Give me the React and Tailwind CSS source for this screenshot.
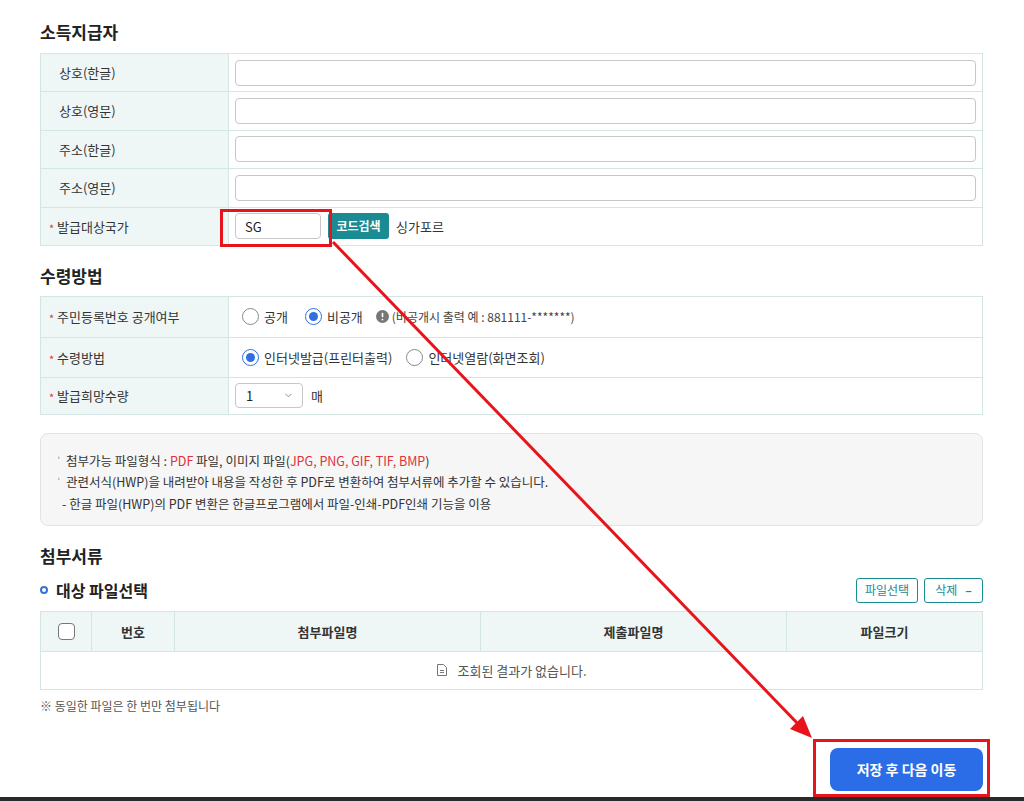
import React from 'react';
import { ChevronDown } from 'lucide-react';

const font = { fontFamily: '"Noto Sans CJK KR", "Noto Sans", sans-serif' };

// 라디오 버튼 (선택 / 미선택)
const Radio = ({ checked, label }) => (
    <label className="flex items-center gap-[5px] text-[13px] text-[#333]">
        {checked ? (
            <span className="w-[17px] h-[17px] rounded-full border-[1.5px] border-[#2f6fe0] flex items-center justify-center">
                <span className="w-[9px] h-[9px] rounded-full bg-[#2f6fe0]" />
            </span>
        ) : (
            <span className="w-[17px] h-[17px] rounded-full border border-[#8a8a8a] bg-white" />
        )}
        {label}
    </label>
);

const Label = ({ required, children }) => (
    <div className="bg-[#eef7f6] border-r border-[#d3e6e3] flex items-center text-[13px] text-[#333] pl-[8px]">
        {required ? (
            <span className="text-[#e0323a] text-[11px] w-[8px] leading-none mt-[4px]">*</span>
        ) : (
            <span className="w-[10px]" />
        )}
        {children}
    </div>
);

const TextInput = () => (
    <div className="flex items-center px-[6px]">
        <div className="w-full h-[26px] rounded-[4px] border border-[#c7c7c7] bg-white" />
    </div>
);

const App = () => {
    const rows = ['상호(한글)', '상호(영문)', '주소(한글)', '주소(영문)'];

    return (
        <div className="relative w-[1024px] h-[801px] bg-white overflow-hidden flex flex-col" style={font}>
            <div className="pl-10 pr-[41px] pt-[21px]">
                {/* 소득지급자 */}
                <h2 className="text-[17px] font-bold leading-[22px] text-[#222] mb-[10px]">소득지급자</h2>
                <div className="border border-[#d3e6e3]">
                    {rows.map((r) => (
                        <div key={r} className="grid grid-cols-[188px_1fr] h-[38.4px] border-b border-[#d3e6e3]">
                            <Label>{r}</Label>
                            <TextInput />
                        </div>
                    ))}
                    <div className="grid grid-cols-[188px_1fr] h-[37.4px]">
                        <Label required>발급대상국가</Label>
                        <div className="flex items-center px-[6px]">
                            <div className="w-[86px] h-[26px] rounded-[4px] border border-[#c7c7c7] bg-white flex items-center pl-[9px] text-[13px] text-[#222]">SG</div>
                            <button className="ml-[7px] w-[61px] h-[26px] bg-[#1a8b92] text-white text-[12px] font-bold rounded-[3px]">코드검색</button>
                            <span className="ml-[7px] text-[13px] text-[#333]">싱가포르</span>
                        </div>
                    </div>
                </div>

                {/* 수령방법 */}
                <h2 className="text-[17px] font-bold leading-[22px] text-[#222] mt-[19px] mb-[9px]">수령방법</h2>
                <div className="border border-[#d3e6e3]">
                    <div className="grid grid-cols-[188px_1fr] h-[41px] border-b border-[#d3e6e3]">
                        <Label required>주민등록번호 공개여부</Label>
                        <div className="flex items-center pl-[13px]">
                            <Radio label="공개" />
                            <span className="ml-[17px]"><Radio checked label="비공개" /></span>
                            <svg className="ml-[13px]" width="13" height="13" viewBox="0 0 13 13">
                                <circle cx="6.5" cy="6.5" r="6.5" fill="#777" />
                                <rect x="5.7" y="2.8" width="1.6" height="4.6" rx="0.8" fill="#fff" />
                                <circle cx="6.5" cy="9.6" r="0.9" fill="#fff" />
                            </svg>
                            <span className="ml-[3px] text-[12px] text-[#444]">(비공개시 출력 예 : 881111-*******)</span>
                        </div>
                    </div>
                    <div className="grid grid-cols-[188px_1fr] h-[40px] border-b border-[#d3e6e3]">
                        <Label required>수령방법</Label>
                        <div className="flex items-center pl-[13px]">
                            <Radio checked label="인터넷발급(프린터출력)" />
                            <span className="ml-[14px]"><Radio label="인터넷열람(화면조회)" /></span>
                        </div>
                    </div>
                    <div className="grid grid-cols-[188px_1fr] h-[36px]">
                        <Label required>발급희망수량</Label>
                        <div className="flex items-center px-[6px]">
                            <div className="w-[68px] h-[25px] rounded-[4px] border border-[#c7c7c7] flex items-center justify-between pl-[10px] pr-[8px] text-[13px] text-[#222]">
                                1
                                <ChevronDown size={11} strokeWidth={2} className="text-[#888]" />
                            </div>
                            <span className="ml-[8px] text-[13px] text-[#333]">매</span>
                        </div>
                    </div>
                </div>

                {/* 안내 박스 */}
                <div className="mt-[18px] h-[93px] rounded-[8px] border border-[#e2e2e2] bg-[#f6f6f6] pt-[16px] pl-[17px] text-[12.5px] leading-[21.5px] text-[#333]">
                    <p className="flex">
                        <span className="w-[8px] text-[9px] text-[#888]">ˈ</span>
                        <span>
                            첨부가능 파일형식 : <span className="text-[#e0323a]">PDF</span> 파일, 이미지 파일(
                            <span className="text-[#e0323a]">JPG, PNG, GIF, TIF, BMP</span>)
                        </span>
                    </p>
                    <p className="flex">
                        <span className="w-[8px] text-[9px] text-[#888]">ˈ</span>
                        <span>관련서식(HWP)을 내려받아 내용을 작성한 후 PDF로 변환하여 첨부서류에 추가할 수 있습니다.</span>
                    </p>
                    <p className="pl-[4px]">- 한글 파일(HWP)의 PDF 변환은 한글프로그램에서 파일-인쇄-PDF인쇄 기능을 이용</p>
                </div>

                {/* 첨부서류 */}
                <h2 className="text-[17px] font-bold leading-[22px] text-[#222] mt-[19px]">첨부서류</h2>
                <div className="mt-[9px] mb-[6px] h-[29px] flex items-center justify-between">
                    <div className="flex items-center">
                        <span className="w-[8px] h-[8px] rounded-full border-2 border-[#3b6fd6]" />
                        <span className="ml-[8px] text-[16px] font-bold text-[#222]">대상 파일선택</span>
                    </div>
                    <div className="flex gap-[6px]">
                        <button className="w-[62px] h-[25px] rounded-[3px] border border-[#1a8b92] text-[#1a8b92] text-[12px]">파일선택</button>
                        <button className="w-[59px] h-[25px] rounded-[3px] border border-[#1a8b92] text-[#1a8b92] text-[12px] flex items-center justify-center gap-[8px]">
                            삭제 <span className="font-bold">–</span>
                        </button>
                    </div>
                </div>
                <div className="border border-[#d3e6e3]">
                    <div className="grid grid-cols-[51px_83px_306px_306px_1fr] h-[40px] bg-[#eef7f6] border-b border-[#d3e6e3] text-[13px] font-bold text-[#333]">
                        <div className="flex items-center justify-center border-r border-[#d3e6e3]">
                            <span className="w-[17px] h-[17px] rounded-[4px] border border-[#777] bg-white" />
                        </div>
                        <div className="flex items-center justify-center border-r border-[#d3e6e3]">번호</div>
                        <div className="flex items-center justify-center border-r border-[#d3e6e3]">첨부파일명</div>
                        <div className="flex items-center justify-center border-r border-[#d3e6e3]">제출파일명</div>
                        <div className="flex items-center justify-center">파일크기</div>
                    </div>
                    <div className="h-[37px] flex items-center justify-center gap-[9px] text-[13px] text-[#555]">
                        <svg width="12" height="14" viewBox="0 0 12 14" fill="none" stroke="#777" strokeWidth="1">
                            <path d="M1.5 1.5h6l3 3v8h-9z" strokeLinejoin="round" />
                            <path d="M4 7.5h4M4 9.5h4" />
                        </svg>
                        조회된 결과가 없습니다.
                    </div>
                </div>
                <p className="mt-[8px] text-[12px] leading-[16px] text-[#555]">※ 동일한 파일은 한 번만 첨부됩니다</p>

                <div className="mt-[34px] flex justify-end">
                    <button className="w-[153px] h-[43px] rounded-[8px] bg-[#2a6de6] text-white text-[14px] font-bold">저장 후 다음 이동</button>
                </div>
            </div>

            <div className="mt-auto h-[4px] bg-[#2a2a2a]" />

            {/* 주석 표시 (빨간 박스와 화살표) */}
            <div className="absolute left-[220px] top-[209px] w-[112px] h-[38px] border-[3px] border-[#e8141b]" />
            <div className="absolute left-[813px] top-[739px] w-[177px] h-[58px] border-[3px] border-[#e8141b]" />
            <svg className="absolute left-0 top-0 pointer-events-none" width="1024" height="801">
                <line x1="333" y1="242" x2="800" y2="726" stroke="#e8141b" strokeWidth="3" />
                <polygon points="812,738 790,729 803,716" fill="#e8141b" />
            </svg>
        </div>
    );
};

export default App;
